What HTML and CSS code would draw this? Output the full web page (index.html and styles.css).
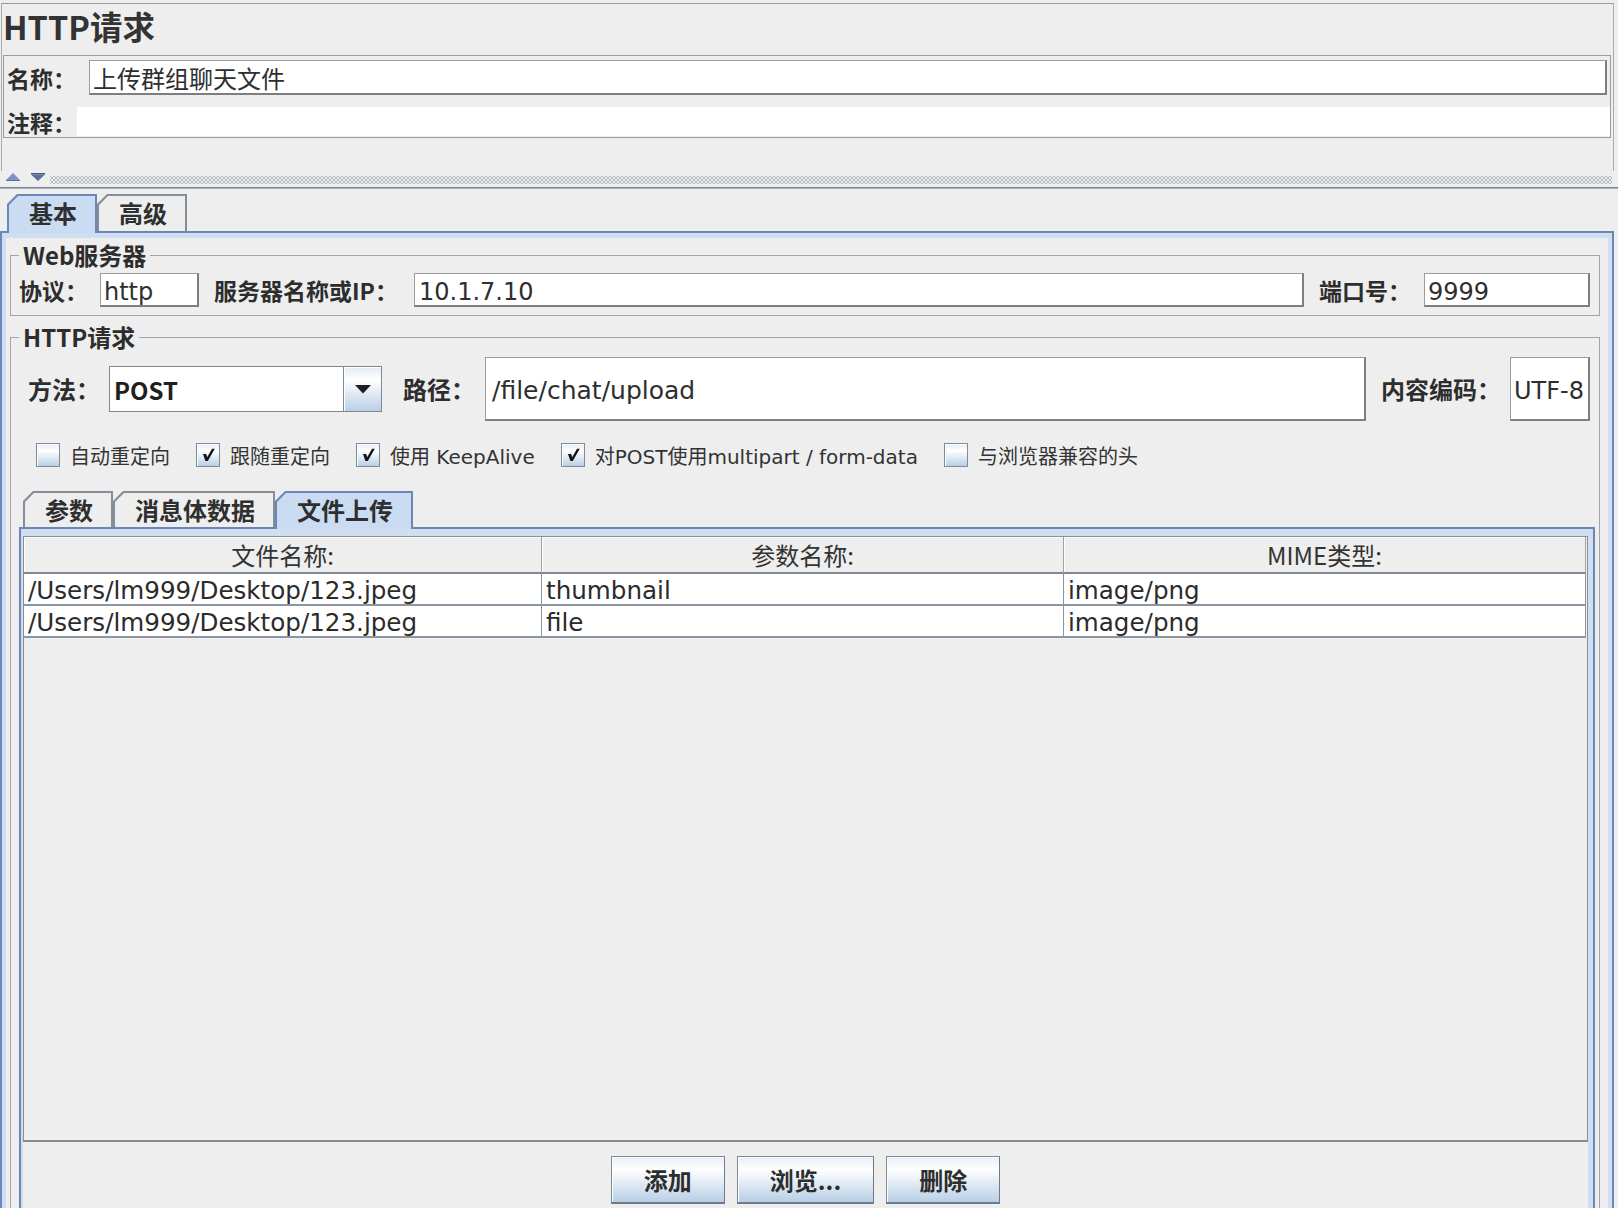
FILE: index.html
```html
<!DOCTYPE html>
<html lang="zh-CN">
<head>
<meta charset="utf-8">
<title>HTTP请求</title>
<link rel="stylesheet" href="styles.css">
</head>
<body>
<div class="app">
  <section class="head">
    <h1 class="title">HTTP请求</h1>
    <div class="nc">
      <div class="nc-row name-row">
        <span class="nc-label name-label">名称：</span>
        <div class="tf name-field">上传群组聊天文件</div>
      </div>
      <div class="nc-row comment-row">
        <span class="nc-label comment-label">注释：</span>
        <div class="comment-field"></div>
      </div>
    </div>
  </section>

  <div class="splitter">
    <svg class="split-arrows" width="42" height="10" viewBox="0 0 42 10">
      <path d="M0 8 L7 1 L14 8 Z" fill="#7d93c4"/>
      <path d="M0 8 L14 8 L14 9 L0 9 Z" fill="#5b6f9e"/>
      <path d="M25 1 L39 1 L39 2.5 L25 2.5 Z" fill="#45598a"/>
      <path d="M25 2.5 L39 2.5 L32 9 Z" fill="#5a6fa0"/>
    </svg>
    <div class="bumps"></div>
  </div>
  <div class="split-line"></div>

  <div class="tabstrip outer-strip">
    <div class="tab tab-on"><span class="tab-face">基本</span></div>
    <div class="tab"><span class="tab-face">高级</span></div>
  </div>
  <div class="tabpanel outer-panel">
    <div class="panel-body">
      <fieldset class="group web-group">
        <legend class="group-title">Web服务器</legend>
        <div class="form-row web-row">
          <span class="lbl l-proto">协议：</span>
          <div class="tf latin f-proto">http</div>
          <span class="lbl l-host">服务器名称或IP：</span>
          <div class="tf latin f-host">10.1.7.10</div>
          <span class="lbl l-port">端口号：</span>
          <div class="tf latin f-port">9999</div>
        </div>
      </fieldset>

      <fieldset class="group http-group">
        <legend class="group-title">HTTP请求</legend>
        <div class="form-row method-row">
          <span class="lbl big l-method">方法：</span>
          <div class="combo">
            <span class="combo-value">POST</span>
            <span class="combo-btn">
              <svg width="16" height="9" viewBox="0 0 16 9"><path d="M0 0 L16 0 L8 8.5 Z" fill="#1e1e1e"/></svg>
            </span>
          </div>
          <span class="lbl big l-path">路径：</span>
          <div class="tf latin f-path">/file/chat/upload</div>
          <span class="lbl big l-enc">内容编码：</span>
          <div class="tf latin f-enc">UTF-8</div>
        </div>

        <div class="checks">
          <label class="check"><span class="box"></span>自动重定向</label>
          <label class="check"><span class="box"><svg width="16" height="16" viewBox="0 0 16 16"><path d="M3 7 L6.2 7 L7.2 10.2 L12 1.8 L14.8 1.8 L7.8 14 L5.4 14 Z" fill="#151515"/></svg></span>跟随重定向</label>
          <label class="check"><span class="box"><svg width="16" height="16" viewBox="0 0 16 16"><path d="M3 7 L6.2 7 L7.2 10.2 L12 1.8 L14.8 1.8 L7.8 14 L5.4 14 Z" fill="#151515"/></svg></span>使用 KeepAlive</label>
          <label class="check"><span class="box"><svg width="16" height="16" viewBox="0 0 16 16"><path d="M3 7 L6.2 7 L7.2 10.2 L12 1.8 L14.8 1.8 L7.8 14 L5.4 14 Z" fill="#151515"/></svg></span>对POST使用multipart / form-data</label>
          <label class="check"><span class="box"></span>与浏览器兼容的头</label>
        </div>

        <div class="tabstrip inner-strip">
          <div class="tab"><span class="tab-face">参数</span></div>
          <div class="tab"><span class="tab-face">消息体数据</span></div>
          <div class="tab tab-on"><span class="tab-face">文件上传</span></div>
        </div>
        <div class="tabpanel inner-panel">
          <div class="inner-body">
            <div class="scrollpane">
              <table class="files">
                <colgroup><col class="c1"><col class="c2"><col class="c3"></colgroup>
                <thead>
                  <tr><th>文件名称:</th><th>参数名称:</th><th>MIME类型:</th></tr>
                </thead>
                <tbody>
                  <tr><td>/Users/lm999/Desktop/123.jpeg</td><td>thumbnail</td><td>image/png</td></tr>
                  <tr><td>/Users/lm999/Desktop/123.jpeg</td><td>file</td><td>image/png</td></tr>
                </tbody>
              </table>
            </div>
            <div class="buttons">
              <button class="btn">添加</button>
              <button class="btn">浏览...</button>
              <button class="btn">删除</button>
            </div>
          </div>
        </div>
      </fieldset>
    </div>
  </div>
</div>
</body>
</html>
```

FILE: styles.css
```css
* { box-sizing: border-box; }

html, body {
  margin: 0;
  padding: 0;
  overflow: hidden;
}

body {
  width: 1618px;
  height: 1208px;
  background: #eeeeee;
  color: #333333;
  font-family: "Noto Sans CJK SC", sans-serif;
}

.app {
  width: 1618px;
}

/* ---------- top section ---------- */
.head {
  margin: 3px 0 0 1px;
  width: 1613px;
  height: 168px;
  border-top: 1px solid #9a9a9a;
  border-left: 1px solid #ababab;
  border-right: 1px solid #ababab;
}

.title {
  margin: 0;
  height: 44px;
  font: 700 32.5px/44px "Noto Sans CJK SC", sans-serif;
  color: #333333;
  padding-left: 1px;
}

.nc {
  margin: 7px 0 0 1px;
  width: 1608px;
  height: 83px;
  border: 1px solid #9c9c9c;
}

.nc-row {
  display: flex;
  align-items: center;
}

.name-row {
  margin-top: 4px;
  height: 35px;
}

.comment-row {
  margin-top: 12px;
  height: 29px;
}

.nc-label {
  padding-left: 3px;
  font: 700 23px/30px "Noto Sans CJK SC", sans-serif;
  color: #2d2d2d;
  white-space: nowrap;
}

.name-label { width: 85px; }
.comment-label { width: 73px; }

.name-field {
  flex: 1;
  height: 35px;
  margin-right: 3px;
}

.comment-field {
  flex: 1;
  height: 29px;
  background: #ffffff;
}

/* ---------- text field ---------- */
.tf {
  display: flex;
  align-items: center;
  background: #ffffff;
  border-style: solid;
  border-width: 1px 2px 2px 1px;
  border-color: #9d9d9d #7e7e7e #7e7e7e #9d9d9d;
  padding-left: 3px;
  font: 24px "DejaVu Sans", "Noto Sans CJK SC", sans-serif;
  color: #2e2e2e;
  white-space: nowrap;
  overflow: hidden;
}

.tf.latin {
  padding-top: 4px;
}

/* ---------- splitter ---------- */
.splitter {
  height: 16px;
  display: flex;
  align-items: center;
  padding-left: 6px;
}

.split-arrows {
  display: block;
  margin-top: -4px;
}

.bumps {
  flex: 1;
  height: 8px;
  margin: 2px 6px 0 2px;
  background-image:
    radial-gradient(circle, #b3bac4 0.8px, transparent 1.2px),
    radial-gradient(circle, #b3bac4 0.8px, transparent 1.2px);
  background-size: 4px 4px, 4px 4px;
  background-position: 0 0, 2px 2px;
}

.split-line {
  height: 2px;
  border-top: 1px solid #7b8797;
  border-bottom: 1px solid #aab3bf;
}

/* ---------- tabs ---------- */
.tabstrip {
  display: flex;
  align-items: flex-end;
  position: relative;
  z-index: 2;
}

.outer-strip {
  margin-top: 5px;
  height: 37px;
  padding-left: 7px;
}

.inner-strip {
  margin-top: 21px;
  height: 36px;
  padding-left: 4px;
}

.tab {
  height: 100%;
  background: #848e99;
  padding: 2px 2px 0 2px;
  clip-path: polygon(0 10px, 10px 0, 100% 0, 100% 100%, 0 100%);
}

.tab-face {
  display: block;
  height: 100%;
  padding: 0 18px 0 20px;
  background: #eeeeee;
  clip-path: polygon(0 9px, 9px 0, 100% 0, 100% 100%, 0 100%);
  font: 700 24px/34px "Noto Sans CJK SC", sans-serif;
  color: #2f2f2f;
  white-space: nowrap;
}

.tab-on {
  background: #6c86b7;
  height: calc(100% + 2px);
  margin-bottom: -2px;
}

.tab-on .tab-face {
  background: #c9dcf1;
}

.tabpanel {
  position: relative;
  z-index: 1;
  border: 2px solid #6c86b7;
  border-bottom: none;
  background: #cfdff1;
}

.outer-panel {
  width: 1614px;
  padding: 5px 4px 0 4px;
}

.panel-body {
  background: #eeeeee;
  padding: 0 8px 0 4px;
  height: 1100px;
}

/* ---------- group boxes ---------- */
.group {
  margin: 0;
  min-width: 0;
  border: 1px solid #a4a4a4;
}

.group-title {
  padding: 0 4px;
  font: 700 24px/34px "Noto Sans CJK SC", sans-serif;
  color: #2d2d2d;
}

.web-group {
  padding: 1px 9px 8px 8px;
}

.http-group {
  margin-top: 4px;
  padding: 3px 4px 0 8px;
  height: 1000px;
}

.form-row {
  display: flex;
  align-items: center;
}

.web-row {
  height: 34px;
}

.web-row .tf {
  height: 34px;
}

.lbl {
  font: 700 23px/30px "Noto Sans CJK SC", sans-serif;
  color: #2d2d2d;
  white-space: nowrap;
}

.lbl.big {
  font-size: 24px;
}

.l-proto { width: 81px; }
.f-proto { width: 99px; }
.l-host { width: 200px; margin-left: 15px; }
.f-host { flex: 1; padding-left: 4px; }
.l-port { width: 105px; margin-left: 15px; }
.f-port { width: 166px; padding-left: 3px; }

.method-row {
  height: 64px;
  padding: 0 5px 0 9px;
}

.l-method { width: 81px; }
.l-path { width: 82px; margin-left: 21px; }
.l-enc { width: 129px; margin-left: 15px; }

.f-path {
  flex: 1;
  height: 64px;
  padding-left: 6px;
  font-size: 25px;
}

.f-enc {
  width: 80px;
  height: 64px;
  padding-left: 3px;
}

.combo {
  width: 273px;
  height: 46px;
  display: flex;
  border: 1px solid #7f8893;
  background: #ffffff;
}

.combo-value {
  flex: 1;
  display: flex;
  align-items: center;
  padding-left: 4px;
  font: 700 24px "Noto Sans CJK SC", sans-serif;
  color: #1f1f1f;
}

.combo-btn {
  width: 38px;
  display: flex;
  align-items: center;
  justify-content: center;
  border-left: 1px solid #7f8893;
  background: linear-gradient(#e4ecf6 0%, #ffffff 30%, #b9cfe6 100%);
  box-shadow: inset 1px 1px 0 #ffffff;
}

/* ---------- checkboxes ---------- */
.checks {
  margin-top: 19px;
  height: 30px;
  display: flex;
  align-items: center;
  gap: 26px;
  padding-left: 17px;
}

.check {
  display: flex;
  align-items: center;
  gap: 10px;
  font: 20px "DejaVu Sans", "Noto Sans CJK SC", sans-serif;
  color: #333333;
  white-space: nowrap;
}

.box {
  width: 24px;
  height: 24px;
  display: flex;
  align-items: center;
  justify-content: center;
  border: 1px solid #7f8b98;
  background: linear-gradient(#e4ecf6 0%, #ffffff 30%, #b9cfe6 100%);
  box-shadow: inset 1px 1px 0 #ffffff;
}

/* ---------- inner tab panel ---------- */
.inner-panel {
  padding: 7px 5px 0 2px;
}

.inner-body {
  background: #eeeeee;
  height: 900px;
}

.scrollpane {
  height: 606px;
  border: 1px solid #8f8f8f;
  border-bottom: 2px solid #8a8a8a;
  background: #eeeeee;
}

.files {
  width: 1562px;
  table-layout: fixed;
  border-collapse: separate;
  border-spacing: 0;
}

.files .c1 { width: 518px; }
.files .c2 { width: 522px; }
.files .c3 { width: 522px; }

.files thead tr { height: 37px; }
.files tbody tr { height: 32px; }

.files th {
  padding: 0;
  background: #eeeeee;
  border-right: 1px solid #a2a2a2;
  border-bottom: 2px solid #7f8993;
  box-shadow: inset 1px 1px 0 #ffffff;
  font: 400 24px "Noto Sans CJK SC", sans-serif;
  color: #333333;
  text-align: center;
  vertical-align: middle;
}

.files td {
  height: 32px;
  padding: 3px 4px 0 4px;
  background: #ffffff;
  border-right: 1px solid #8c96a0;
  border-bottom: 2px solid #8c96a0;
  font: 24.6px/25px "DejaVu Sans", "Noto Sans CJK SC", sans-serif;
  color: #2b2b2b;
  white-space: nowrap;
  overflow: hidden;
  vertical-align: middle;
}

/* ---------- buttons ---------- */
.buttons {
  margin-top: 14px;
  display: flex;
  justify-content: center;
  gap: 12px;
}

.btn {
  height: 48px;
  padding: 0 32px;
  border: 1px solid #7d8895;
  border-right-color: #6f7a86;
  border-bottom: 2px solid #6f7a86;
  background: linear-gradient(#e6eef8 0%, #ffffff 28%, #b8cee6 100%);
  box-shadow: inset 1px 1px 0 #ffffff;
  font: 700 24px/44px "Noto Sans CJK SC", sans-serif;
  color: #2d2d2d;
}
```
